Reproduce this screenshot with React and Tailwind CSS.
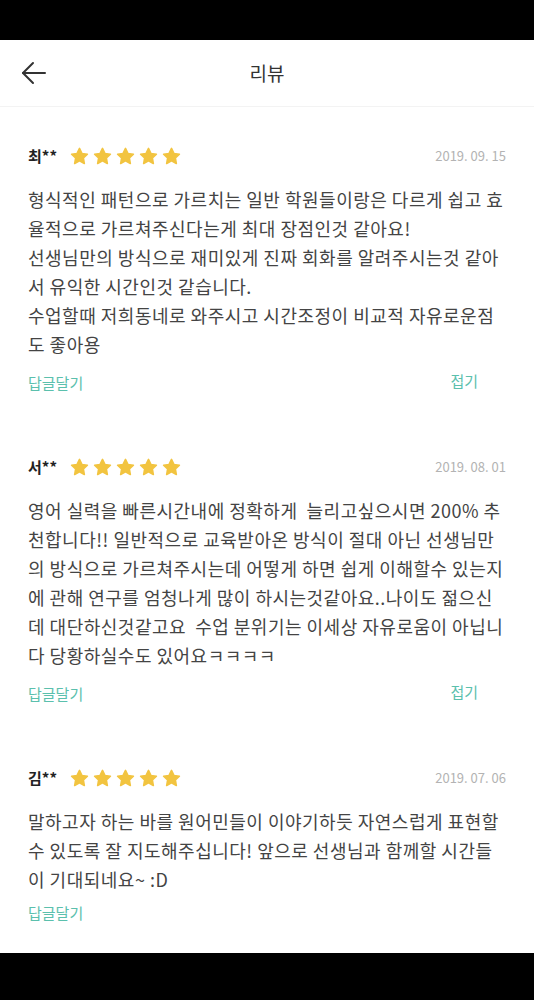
import React from 'react';

const reviews = [
  {
    name: '최**',
    date: '2019. 09. 15',
    lines: [
      '형식적인 패턴으로 가르치는 일반 학원들이랑은 다르게 쉽고 효',
      '율적으로 가르쳐주신다는게 최대 장점인것 같아요!',
      '선생님만의 방식으로 재미있게 진짜 회화를 알려주시는것 같아',
      '서 유익한 시간인것 같습니다.',
      '수업할때 저희동네로 와주시고 시간조정이 비교적 자유로운점',
      '도 좋아용',
    ],
    fold: true,
  },
  {
    name: '서**',
    date: '2019. 08. 01',
    lines: [
      '영어 실력을 빠른시간내에 정확하게  늘리고싶으시면 200% 추',
      '천합니다!! 일반적으로 교육받아온 방식이 절대 아닌 선생님만',
      '의 방식으로 가르쳐주시는데 어떻게 하면 쉽게 이해할수 있는지',
      '에 관해 연구를 엄청나게 많이 하시는것같아요..나이도 젊으신',
      '데 대단하신것같고요  수업 분위기는 이세상 자유로움이 아닙니',
      '다 당황하실수도 있어요ㅋㅋㅋㅋ',
    ],
    fold: true,
  },
  {
    name: '김**',
    date: '2019. 07. 06',
    lines: [
      '말하고자 하는 바를 원어민들이 이야기하듯 자연스럽게 표현할',
      '수 있도록 잘 지도해주십니다! 앞으로 선생님과 함께할 시간들',
      '이 기대되네요~ :D',
    ],
    fold: false,
  },
];

function Star() {
  return (
    <svg width="19" height="18" viewBox="0 0 24 23" fill="#f2c440" stroke="#f2c440" strokeWidth="2" strokeLinejoin="round">
      <path d="M12 1.8l3.1 6.4 7 1-5.1 4.9 1.2 7-6.2-3.3-6.2 3.3 1.2-7L1.9 9.2l7-1z" />
    </svg>
  );
}

function Review({ review }) {
  return (
    <div>
      <div className="flex items-center h-[22px]">
        <span className="text-[15px] font-bold text-[#222] w-[42px]">{review.name}</span>
        <div className="flex gap-[4px]">
          {[0, 1, 2, 3, 4].map((i) => (
            <Star key={i} />
          ))}
        </div>
        <span className="ml-auto text-[13px] text-[#b3b3b3]">{review.date}</span>
      </div>
      <div className="mt-[18px] text-[18px] tracking-[0.5px] leading-[29px] text-[#444]">
        {review.lines.map((l, i) => (
          <div key={i} className="whitespace-pre">{l}</div>
        ))}
      </div>
      <div className={`flex items-center h-[22px] text-[15px] text-[#5bc0ad] ${review.fold ? 'mt-[13px]' : 'mt-[8px]'}`}>
        <span>답글달기</span>
        {review.fold && <span className="ml-auto mr-[28px] -mt-[4px]">접기</span>}
      </div>
    </div>
  );
}

export default function App() {
  return (
    <div className="w-[534px] h-[1000px] bg-black flex flex-col" style={{ fontFamily: '"Noto Sans CJK KR", "Noto Sans", sans-serif' }}>
      <div className="h-[40px] bg-black" />
      <div className="h-[913px] bg-white overflow-hidden">
        <div className="h-[67px] flex items-center relative border-b border-[#f3f3f3]">
          <button className="ml-[21px] w-[26px] h-[26px] flex items-center justify-center">
            <svg width="26" height="24" viewBox="0 0 26 24" fill="none" stroke="#333" strokeWidth="2" strokeLinecap="round" strokeLinejoin="round">
              <path d="M24 12H2" />
              <path d="M12 2L2 12l10 10" />
            </svg>
          </button>
          <span className="absolute left-1/2 -translate-x-1/2 text-[19px] text-[#333]">리뷰</span>
        </div>
        <div className="px-[28px] pt-[38px]">
          {reviews.map((r, i) => (
            <div key={i} className={i > 0 ? 'mt-[62px]' : ''}>
              <Review review={r} />
            </div>
          ))}
        </div>
      </div>
      <div className="flex-1 bg-black" />
    </div>
  );
}
